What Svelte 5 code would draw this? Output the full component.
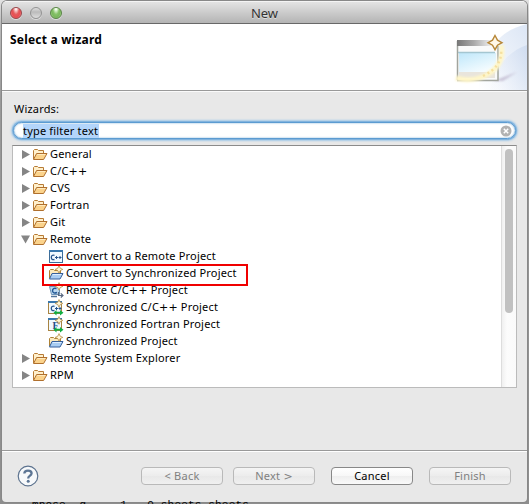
<script>
  const rows = [
    { label: 'General', kind: 'folder', arrow: 'right' },
    { label: 'C/C++', kind: 'folder', arrow: 'right' },
    { label: 'CVS', kind: 'folder', arrow: 'right' },
    { label: 'Fortran', kind: 'folder', arrow: 'right' },
    { label: 'Git', kind: 'folder', arrow: 'right' },
    { label: 'Remote', kind: 'folder', arrow: 'down' },
    { label: 'Convert to a Remote Project', kind: 'cpp', child: true },
    { label: 'Convert to Synchronized Project', kind: 'sync', child: true, marked: true },
    { label: 'Remote C/C++ Project', kind: 'remote', child: true },
    { label: 'Synchronized C/C++ Project', kind: 'synccpp', child: true },
    { label: 'Synchronized Fortran Project', kind: 'syncf', child: true },
    { label: 'Synchronized Project', kind: 'sync', child: true },
    { label: 'Remote System Explorer', kind: 'folder', arrow: 'right' },
    { label: 'RPM', kind: 'folder', arrow: 'right' }
  ];
</script>

{#snippet star()}
  <path d="M11 0.6 L12.200 3.200 L14.800 4.400 L12.200 5.600 L11 8.200 L9.800 5.600 L7.200 4.400 L9.800 3.200 Z" fill="#fff6d8" stroke="#b98f45" stroke-width=".8" />
{/snippet}

{#snippet icon(kind)}
  <svg class="icon" width="16" height="17" viewBox="0 0 16 17">
    {#if kind === 'folder'}
      <path d="M1.500 13V4.500L2.500 3.500H5.500L6.500 4.500H11.500V7.500" fill="#fff0cc" stroke="#b77b35" />
      <path d="M1.500 13.500L4.600 7.500H15L11.600 13.500Z" fill="#fbd38c" stroke="#b0702e" />
      <path d="M5.300 8.500H13.300" stroke="#ffeabf" />
    {:else if kind === 'sync'}
      <path d="M1.500 13V5.500L2.500 4.500H5.500L6.500 5.500H12.500V8" fill="#fbe9bd" stroke="#ad8134" />
      <path d="M1.500 14L4 8.500H15L12 14Z" fill="#a9cdf2" stroke="#345f9c" />
      <path d="M4.800 9.500H13.300" stroke="#ddedff" />
      {@render star()}
    {:else if kind === 'remote'}
      <path d="M1.500 4.500H11.500V12.500H3.500Z" fill="#bcd9ef" stroke="#6d95b8" />
      <path d="M8.500 6.500Q4.500 5.500 4.500 9Q5 12 9 10.500" fill="none" stroke="#245895" stroke-width="1.500" />
      <path d="M3 14.500H9" stroke="#54779c" stroke-width="1.500" />
      <path d="M10.500 10V13.500H15M12.800 11.300L15 13.500L12.800 15.500" fill="none" stroke="#596982" stroke-width="1.200" />
      {@render star()}
    {:else}
      <rect x={kind === 'cpp' ? 1.5 : 0.5} y="2.500" width="13" height="12" fill="#f1f9ff" stroke={kind === 'cpp' ? '#3d6d98' : '#a88442'} />
      <path d={kind === 'cpp' ? 'M1 3H15' : 'M0 3H14'} stroke="#3977ac" stroke-width="2" />
      {#if kind === 'syncf'}
        <text x="4.500" y="13" font-size="10" font-weight="bold" fill="#244e89" font-family="Liberation Serif, serif">F</text>
      {:else}
        <path d="M6.500 7.300Q3.300 6.500 3.300 9.500Q3.500 12.300 6.500 11.500" fill="none" stroke="#28558c" stroke-width="1.300" />
        <path d="M7 9.500H10M8.500 8V11M10.500 9.500H13.500M12 8V11" stroke="#28558c" />
      {/if}
      {#if kind !== 'cpp'}
        <path d="M5.500 13.700L8.500 11V12.800H12V11L15.500 13.700L12 16.400V14.600H8.500V16.400Z" fill="#12ae42" />
        {@render star()}
      {/if}
    {/if}
  </svg>
{/snippet}

<div class="desktop">
  <section class="window">
    <header class="titlebar">
      <div class="lights"><i class="red"></i><i class="gray"></i><i class="green"></i></div>
      <span>New</span>
    </header>

    <div class="banner">
      <h1>Select a wizard</h1>
      <svg width="108" height="66" viewBox="0 0 108 66">
        <defs>
          <linearGradient id="arc" x1="1" y1="0" x2="0" y2="1"><stop stop-color="#dce6f5" /><stop offset="1" stop-color="#fff" /></linearGradient>
          <linearGradient id="arc2" x1="1" y1="0" x2="0" y2=".6"><stop stop-color="#cfdcf0" /><stop offset="1" stop-color="#e8eef9" stop-opacity=".1" /></linearGradient>
          <linearGradient id="bar"><stop stop-color="#777" /><stop offset=".5" stop-color="#aaa" /><stop offset="1" stop-color="#eee" /></linearGradient>
          <linearGradient id="pane" x2=".6" y2="1"><stop stop-color="#bfe7fa" /><stop offset="1" stop-color="#f5fcff" /></linearGradient>
          <filter id="soft" x="-30%" y="-30%" width="160%" height="160%"><feGaussianBlur stdDeviation="1.300" /></filter>
        </defs>
        <path d="M108 0C80 7 67 23 59 66H108Z" fill="url(#arc)" />
        <path d="M108 21C91 27 77 40 71 66H108Z" fill="url(#arc2)" />
        <path d="M74 57L98 48L84 57Z" fill="#b5abc5" opacity=".65" filter="url(#soft)" />
        <rect x="38.500" y="17" width="40" height="39" fill="#f9fafa" />
        <path d="M38.500 56V17M38 56.500H79V22" stroke="#a1a49d" stroke-width="1.500" fill="none" />
        <rect x="38" y="16" width="34" height="6" fill="url(#bar)" />
        <rect x="40" y="29" width="37" height="19" fill="url(#pane)" />
        <path d="M39 28.500H76" stroke="#a4c6d1" stroke-width="1.500" />
        <rect x="40" y="48" width="36" height="6" fill="#e9e5dc" />
        <path d="M37 54Q55 59 71 49Q86 38 82 21" fill="none" stroke="#fff6c8" stroke-width="5" filter="url(#soft)" />
        <path d="M64 52Q84 42 82 25" fill="none" stroke="#f1d489" stroke-width="2.500" stroke-dasharray="2 3" opacity=".65" />
        <path d="M76 11.500L78.500 16.200L83 18.700L78.500 21.200L76 25.700L73.500 21.200L69 18.700L73.500 16.200Z" fill="#fff8e8" stroke="#b78737" stroke-width="1.400" />
      </svg>
    </div>

    <main>
      <label for="filter">Wizards:</label>
      <div class="search" id="filter">
        <span>type filter text</span>
        <svg width="12" height="12" viewBox="0 0 12 12"><circle cx="6" cy="6" r="5.500" fill="#b2b2b2" /><path d="M3.800 3.800L8.200 8.200M8.200 3.800L3.800 8.200" stroke="#fff" stroke-width="1.500" /></svg>
      </div>
      <div class="tree">
        <div class="rows">
          {#each rows as row}
            {@const parts = row.label.split('++')}
            <div class="row" class:child={row.child}>
              {#if row.arrow}
                <svg class="arrow" width="11" height="17" viewBox="0 0 11 17">
                  <path d={row.arrow === 'right' ? 'M2 4L10 8.500L2 13Z' : 'M1 4.500H10L5.500 12.500Z'} fill="#858585" />
                </svg>
              {/if}
              {@render icon(row.kind)}
              <span class="label">{parts[0]}{#if parts.length > 1}<span class="wide">++</span>{parts[1]}{/if}</span>
              {#if row.marked}<b class="mark"></b>{/if}
            </div>
          {/each}
        </div>
        <div class="track"><i></i></div>
      </div>
    </main>

    <footer>
      <svg class="help" width="22" height="22" viewBox="0 0 22 22">
        <circle cx="11" cy="11" r="9.800" fill="#f7f9fb" stroke="#5d738f" stroke-width="1.200" />
        <path d="M7.300 8.500Q7.500 5.600 11 5.600Q14.600 5.600 14.600 8.300Q14.600 9.800 12.600 11Q11.200 11.700 11.200 13.500" fill="none" stroke="#5d7695" stroke-width="2.300" />
        <circle cx="11.200" cy="16.300" r="1.500" fill="#5d7695" />
      </svg>
      <button disabled>&lt; Back</button>
      <button disabled>Next <span class="wide">&gt;</span></button>
      <button class="cancel">Cancel</button>
      <button class="finish" disabled>Finish</button>
    </footer>
  </section>
  <div class="behind">mpose&nbsp; q&nbsp;&nbsp; - 1 - 0 sheets sheets</div>
</div>

<style>
  * { box-sizing: border-box; }
  .desktop { width: 529px; height: 504px; overflow: hidden; padding: 1px 2px 0; background: linear-gradient(#e2e2e2 0, #bbb 25px, #999 100px, #8e8e8e); font: 11px "Noto Sans", sans-serif; letter-spacing: .18px; color: #000; }
  .window { display: flex; flex-direction: column; width: 525px; height: 501px; overflow: hidden; border-radius: 5px 5px 4px 4px; background: #e8e8e8; box-shadow: 0 0 0 1px #888; }
  .titlebar { position: relative; display: flex; align-items: center; justify-content: center; flex: none; height: 23px; border-top: 1px solid #f4f4f4; border-bottom: 1px solid #686868; background: linear-gradient(#e3e3e3, #b4b4b4); }
  .titlebar span { font-size: 13px; color: #333; text-shadow: 0 1px #ddd; letter-spacing: 0; line-height: 20px; }
  .lights { position: absolute; left: 8px; top: 5px; display: flex; gap: 8px; }
  .lights i { width: 12px; height: 12px; border-radius: 50%; border: 1px solid #777; box-shadow: 0 1px #ddd; }
  .lights .red { border-color: #98474a; background: radial-gradient(ellipse at 50% 0, #ffecec 0 12%, #e35d5e 45%, #e84c50 65%, #ff9da0); }
  .lights .gray { border-color: #939393; background: linear-gradient(#dedede, #bbb 40%, #ddd); }
  .lights .green { border-color: #5a8547; background: radial-gradient(ellipse at 50% 0, #f3ffee 0 12%, #86c268 45%, #78b65b 65%, #c3efa7); }
  .banner { display: flex; justify-content: space-between; flex: none; height: 67px; border-bottom: 1px solid #999; background: #fff; }
  h1 { margin: 7px 0 0 8px; font-size: 12px; line-height: 17px; letter-spacing: .2px; }
  main { flex: 1; padding: 9px 10px 0; border-top: 1px solid #fafafa; }
  label { display: block; height: 19px; margin-left: 2px; line-height: 16px; }
  .search { display: flex; align-items: center; justify-content: space-between; width: 503px; height: 17px; margin: 2px 0 6px 1px; padding: 0 3px 0 9px; border: 1px solid #5b9bd1; border-radius: 9px; background: #fff; box-shadow: 0 0 0 1px #82b3dd, 0 0 2px 2px #a5cae8, inset 0 0 2px #76abd6; }
  .search span { padding-right: 1px; height: 14px; line-height: 13px; background: #b3d5fb; }
  .tree { display: flex; width: 505px; height: 243px; border: 1px solid #bbb; border-top-color: #8b8b8b; background: #fff; }
  .rows { flex: 1; }
  .row { position: relative; display: flex; align-items: center; height: 17px; padding-left: 7px; }
  .row.child { padding-left: 35px; }
  .row svg { flex: none; }
  .arrow { margin-right: 1px; }
  .label { height: 17px; margin-left: 2px; line-height: 15px; white-space: nowrap; }
  .wide { font-family: "DejaVu Sans", sans-serif; line-height: 1; }
  .mark { position: absolute; z-index: 1; left: 29px; top: -1px; width: 206px; height: 22px; border: 2px solid #f00000; }
  .track { width: 15px; padding: 3px 0 0 3px; border-left: 1px solid #ddd; background: linear-gradient(90deg, #f0f0f0, #fcfcfc 5px, #fafafa); }
  .track i { display: block; width: 8px; height: 164px; border-radius: 4px; background: #c1c1c1; }
  footer { display: flex; flex: none; align-items: flex-start; height: 52px; padding: 14px 0 0 15px; border-top: 1px solid #999; box-shadow: inset 0 1px #fff; }
  .help { margin-right: 102px; }
  button { width: 82px; height: 18px; margin: 2px 10px 0 0; padding: 0; border: 1px solid #b9b9b9; border-radius: 4px; background: linear-gradient(#f5f5f5, #ececec 50%, #e8e8e8 51%, #f0f0f0); font: 11px/14px "Noto Sans", sans-serif; letter-spacing: .25px; color: #808080; }
  .cancel { margin-left: 6px; margin-right: 16px; border-color: #888; background: linear-gradient(#fff, #f7f7f7 50%, #eee 51%, #fafafa); color: #000; }
  .behind { padding-left: 30px; margin-top: -2px; font: 11px/11px "Liberation Mono", monospace; white-space: nowrap; }
</style>
